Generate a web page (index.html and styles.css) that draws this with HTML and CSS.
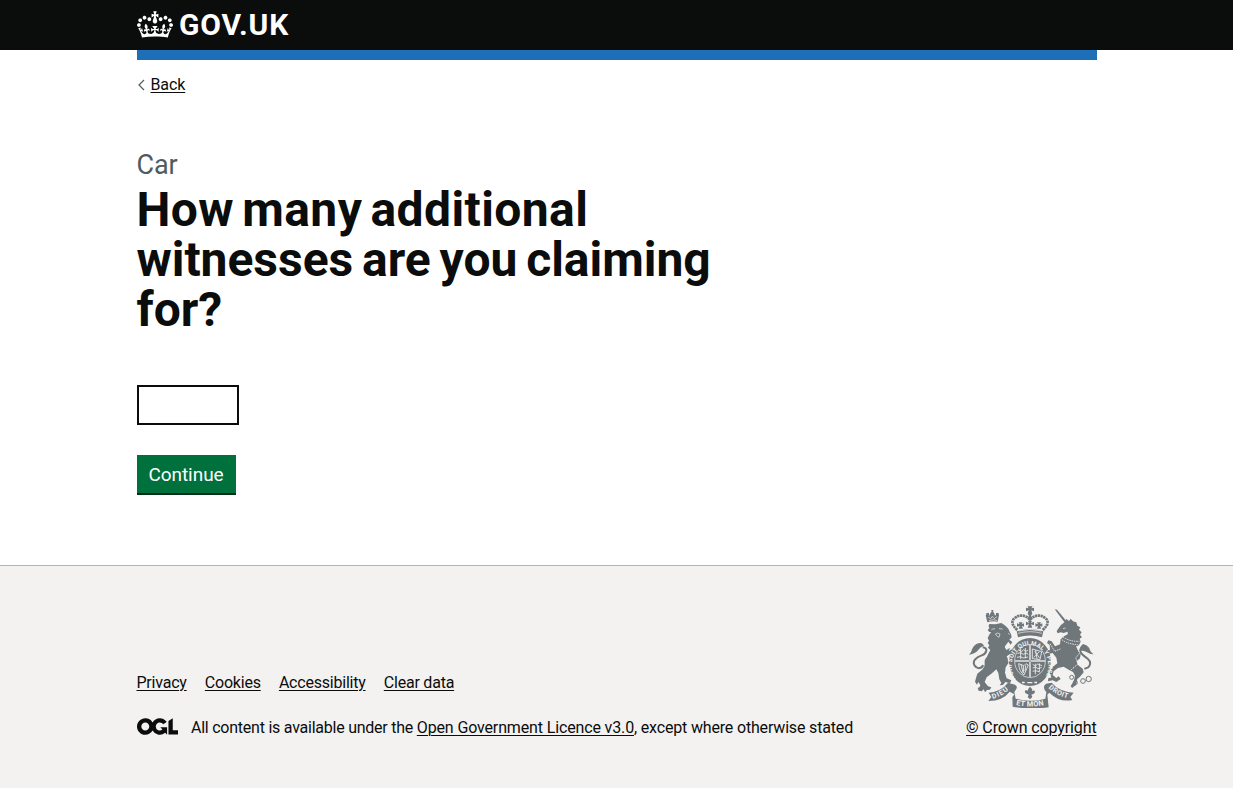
FILE: index.html
```html
<!DOCTYPE html>
<html lang="en"><head><meta charset="utf-8"><title>How many additional witnesses are you claiming for?</title><link rel="stylesheet" href="styles.css"></head>
<body>
<header class="header"><div class="container header-inner">
<a class="logo" href="#">
<svg class="crown" viewBox="0 0 132 97" aria-hidden="true"><path fill="currentColor" fill-rule="evenodd" d="M25 30.2c3.5 1.5 7.7-.2 9.1-3.7 1.5-3.6-.2-7.8-3.9-9.2-3.6-1.4-7.6.3-9.1 3.9-1.4 3.5.3 7.5 3.9 9zM9 39.5c3.6 1.5 7.8-.2 9.2-3.7 1.5-3.6-.2-7.8-3.9-9.1-3.6-1.5-7.6.2-9.1 3.8-1.4 3.5.3 7.5 3.8 9zM4.4 57.2c3.5 1.5 7.7-.2 9.1-3.8 1.5-3.6-.2-7.7-3.9-9.1-3.5-1.5-7.6.3-9.1 3.8-1.4 3.5.3 7.6 3.9 9.1zm38.3-21.4c3.5 1.5 7.7-.2 9.1-3.8 1.5-3.6-.2-7.7-3.9-9.1-3.6-1.5-7.6.3-9.1 3.8-1.3 3.6.4 7.7 3.9 9.1zm64.4-5.6c-3.6 1.5-7.8-.2-9.1-3.7-1.5-3.6.2-7.8 3.8-9.2 3.6-1.4 7.7.3 9.2 3.9 1.3 3.5-.4 7.5-3.9 9zm15.9 9.3c-3.6 1.5-7.7-.2-9.1-3.7-1.5-3.6.2-7.8 3.7-9.1 3.6-1.5 7.7.2 9.2 3.8 1.5 3.5-.3 7.5-3.8 9zm4.7 17.7c-3.6 1.5-7.8-.2-9.2-3.8-1.5-3.6.2-7.7 3.9-9.1 3.6-1.5 7.7.3 9.2 3.8 1.3 3.5-.4 7.6-3.9 9.1zM89.3 35.8c-3.6 1.5-7.8-.2-9.2-3.8-1.4-3.6.2-7.7 3.9-9.1 3.6-1.5 7.7.3 9.2 3.8 1.4 3.6-.3 7.7-3.9 9.1zM69.7 17.7l8.9 4.7V9.3l-8.9 2.8c-.2-.3-.5-.6-.9-.9L72.4 0H59.6l3.5 11.2c-.3.3-.6.5-.9.9l-8.8-2.8v13.1l8.8-4.7c.3.3.6.7.9.9l-5 15.4v.1c-.2.8-.4 1.6-.4 2.4 0 4.1 3.1 7.5 7 8.1h.2c.3 0 .7.1 1 .1.4 0 .7 0 1-.1h.2c4-.6 7.1-4.1 7.1-8.1 0-.8-.1-1.7-.4-2.4V34l-5.1-15.4c.4-.2.7-.6 1-.9zM66 92.8c16.9 0 32.8 1.1 47.1 3.2 4-16.9 8.9-26.7 14-33.5l-9.6-3.4c1 4.9 1.1 7.2 0 10.2-1.5-1.4-3-4.3-4.2-8.7L108.6 76c2.8-2 5-3.2 7.5-3.3-4.4 9.4-10 11.9-13.6 11.2-4.3-.8-6.3-4.6-5.6-7.9 1-4.7 5.7-5.9 8-.5 4.3-8.7-3-11.4-7.6-8.8 7.1-7.2 7.9-13.5 2.1-21.1-8 6.1-8.1 12.3-4.5 20.8-4.7-5.4-12.1-2.5-9.5 6.2 3.4-5.2 7.9-2 7.2 3.1-.6 4.3-6.4 7.8-13.5 7.2-10.3-.9-10.9-8-11.2-13.8 2.5-.5 7.1 1.8 11 7.3L80.2 60c-4.1 4.4-8 5.3-12.3 5.4 1.4-4.4 8-11.6 8-11.6H55.5s6.4 7.2 7.9 11.6c-4.2-.1-8-1-12.3-5.4l1.4 16.4c3.9-5.5 8.5-7.7 10.9-7.3-.3 5.8-.9 12.8-11.1 13.8-7.2.6-12.9-2.9-13.5-7.2-.7-5 3.8-8.3 7.1-3.1 2.7-8.7-4.6-11.6-9.4-6.2 3.7-8.5 3.6-14.7-4.6-20.8-5.8 7.6-5 13.9 2.2 21.1-4.7-2.6-11.9.1-7.7 8.8 2.3-5.5 7.1-4.2 8.1.5.7 3.3-1.3 7.1-5.7 7.9-3.5.7-9-1.8-13.5-11.2 2.5.1 4.7 1.3 7.5 3.3l-4.7-15.4c-1.2 4.4-2.7 7.2-4.3 8.7-1.1-3-.9-5.3 0-10.2l-9.5 3.4c5 6.9 9.9 16.7 14 33.5 14.8-2.1 30.8-3.2 47.7-3.2z"/></svg>
<span class="logo-text">GOV.UK</span></a></div></header>
<div class="page"><div class="container"><div class="bar"></div>
<a class="back" href="#"><svg class="chevron" viewBox="0 0 8 12"><path d="M7 1L2 6l5 5" fill="none" stroke="#505a5f" stroke-width="1.2"/></svg><span class="back-text">Back</span></a>
<main class="main"><span class="caption">Car</span>
<h1 class="heading"><span class="line-first">How many additional</span><br><span class="line-second">witnesses are you claiming</span><br>for?</h1>
<input class="input" type="text" aria-label="Number of additional witnesses">
<button class="button" type="button">Continue</button></main></div></div>
<footer class="footer"><div class="container footer-inner"><div class="meta">
<nav class="links"><a href="#">Privacy</a><a href="#">Cookies</a><a href="#">Accessibility</a><a href="#">Clear data</a></nav>
<div class="licence"><svg class="ogl" viewBox="0 0 483.2 195.7"><path fill="currentColor" d="M421.5 142.8V.1l-50.7 32.3v161.1h112.4v-50.7zm-122.3-9.6A47.12 47.12 0 0 1 221 97.8c0-26 21.1-47.1 47.1-47.1 16.7 0 31.4 8.7 39.7 21.8l42.7-27.2A97.63 97.63 0 0 0 268.1 0c-36.5 0-68.3 20.1-85.1 49.7A98 98 0 0 0 97.8 0C43.9 0 0 43.9 0 97.8s43.9 97.8 97.8 97.8c36.5 0 68.3-20.1 85.1-49.7a97.76 97.76 0 0 0 149.6 25.4l19.4 22.2h3v-87.8h-80l24.3 27.5zM97.8 145c-26 0-47.1-21.1-47.1-47.1s21.1-47.1 47.1-47.1 47.1 21.1 47.1 47.1S123.8 145 97.8 145"/></svg>
<span><span class="licence-lead">All content is available under the </span><a class="licence-link" href="#">Open Government Licence v3.0</a><span class="licence-tail">, except where otherwise stated</span></span></div></div>
<div class="copyright">
<svg class="arms" viewBox="15 12 375 306" aria-hidden="true">
<defs><path id="garter" d="M155 230A55 62 0 1 1 241 230"/><path id="scroll-left" d="M86 291Q114 283 136 262"/><path id="scroll-mid" d="M156 309Q198 318 242 309"/><path id="scroll-right" d="M253 258Q280 283 316 290"/></defs>
<g fill="#6f777b">
<!-- lion -->
<path d="M76 66Q71 73 76 79L71 84 76 90 82 91 77 96 71 108 75 116 71 123 76 130 72 137 79 144 73 155 69 164Q60 172 62 184Q64 194 56 202L40 215 36 228 33 239 39 248 43 240 49 249 47 255 41 258 44 266 53 268 59 262 63 271 69 264 78 263 82 256 72 253 62 240 68 226 84 214 97 202 103 213 106 232 112 243 107 250 117 249 124 240 138 244 142 235 128 229 123 212 125 196 133 184 145 188 134 176 128 163 139 156 150 150 142 142 134 148 138 137 127 144 122 134 133 119 140 128 145 120 136 113 143 106 141 97 137 89 133 80 125 72 118 67 112 63 94 67Z"/>
<path d="M70 61L65 40 71 35 75 42 80 32 85 26 90 32 93 41 99 34 105 40 101 59Q85 55 70 61Z"/>
<!-- lion crown jewels and tail -->
<path d="M82 24h6v4h-6zM67 33h8v8h-8zM96 33h8v8h-8z"/>
<path d="M15 158Q23 151 24 142Q31 127 43 124Q56 120 60 131Q48 135 42 145Q35 155 15 158Z"/>
<!-- unicorn -->
<path d="M272 22L279 23 309 59 303 63Z"/>
<path d="M290 70L306 57 306 50 315 57 320 50 327 58 337 61 340 71 349 76 345 83 353 91 348 98 354 106 347 110 350 119 345 129 337 134 343 147 350 156 348 169 338 178 341 188 356 200 359 211 348 224 340 231 336 249 324 258 320 252 329 238 333 221 327 210 314 203 299 194 282 198 269 208 266 219 277 228 284 223 290 231 277 240 266 235 252 238 253 228 262 227 256 211 266 195 280 184 277 167 266 153 256 155 245 144 258 145 257 129 249 123 253 115 263 118 273 133 288 127 290 111 300 103 311 97 311 89 299 93 290 91 281 94 278 87Z"/>
<path d="M389 157Q379 157 366 149Q356 144 348 147Q346 134 357 126Q368 128 376 138Q378 150 389 157Z"/>
<!-- crown -->
<path d="M194 19l-4-6h16l-4 6 8-2v11l-8-3 3 10-4 6 5 9-8 7-8-7 5-9-4-6 3-10-8 3V17zM158 88Q198 75 238 88L234 106Q198 95 162 106ZM164 80l3-8-8 2v-10l8 3-3-6h12l-3 6 7-3v10l-7-2 4 8zM219 80l3-8-8 2v-10l8 3-3-6h12l-3 6 7-3v10l-7-2 4 8zM191 77l4-10-9 3V59l9 4-3-7h12l-3 7 9-4v11l-9-3 4 10z"/>
<ellipse cx="198" cy="180" rx="63" ry="72"/>
<!-- scroll -->
<path d="M74 272Q112 268 132 242L153 248Q163 254 155 264L151 270 155 290Q198 303 244 290L247 270Q233 255 246 245L263 242Q284 268 329 272L319 285 325 294Q286 302 256 272L250 278 254 316Q198 323 146 314L145 286 151 277 137 269Q117 296 73 297L82 285Z"/>
</g>
<g fill="none" stroke="#6f777b">
<path stroke-width="6" d="M56 136C73 137 69 154 53 160C35 166 24 178 32 191C40 203 55 199 57 189M352 137C341 151 359 161 371 170C384 181 379 198 361 200"/>
<path stroke-width="8" stroke-dasharray="7 1.6" d="M160 84Q136 63 151 49Q174 31 198 52M236 84Q260 63 245 49Q222 31 198 52"/>
<path stroke-width="3" d="M317 226a6 6 0 1 0 12 0a6 6 0 1 0-12 0M328 242a6 6 0 1 0 12 0a6 6 0 1 0-12 0M350 237a7 7 0 1 0 14 0a7 7 0 1 0-14 0M366 231a8 8 0 1 0 16 0a8 8 0 1 0-16 0"/>
</g>
<g fill="none" stroke="#f3f2f1" stroke-width="2">
<path d="M75 56Q88 50 99 56M73 46l7 4 5-7 6 7 8-6M82 82l11-2M105 80l11 1M94 96l6-3 8 3-3 10-5-3zM132 94l5 3M162 94Q198 84 234 94M164 87Q198 78 232 87"/>
<ellipse cx="198" cy="177" rx="46" ry="50"/>
<path stroke-width="3" stroke-dasharray="4 3" d="M289 108Q304 126 342 128M292 101Q312 119 346 118M338 133l9 20-12 15 8 17-21 18M258 125l14 23 17-7"/>
<path d="M297 80l8-2M134 160Q129 205 156 237M262 160Q267 205 240 237" stroke-width="2"/>
</g>
<!-- quartered shield -->
<g stroke="#f3f2f1" stroke-width="2.5" fill="none">
<path d="M198 128V225M153 177H244" stroke-width="6"/>
<path d="M164 144l8 5 7-6 6 5 7-3M160 155l9-3 9 5 8-4 7 4M159 166l11-2 7 4 15-3M170 139v32M184 138v31M205 141l28 8-5 24-23-3zM212 148l15 20M226 149l-17 18M215 144l4 27M164 185Q165 208 180 219L193 189 186 185 180 191zM171 187l6 25M178 192l1 21M185 190l-2 17M206 187l8 5 7-6 13 5M206 198l9-3 7 5 11-4M206 208l9-2 12 4M214 185v32M226 184v26"/>
</g>
<path d="M198 128V225M153 177H244" stroke="#6f777b" stroke-width="2"/>
<!-- emblem beneath the shield -->
<path fill="#f3f2f1" d="M174 239h8v5h-8zM211 239h8v5h-8zM190 240h15v4h-15zM180 254h36l3 34q-22 6-42 0z"/>
<path fill="#6f777b" d="M198 254q-11 10-4 18-1-9-10-7-5 8 7 12l3 1-3 7 7 7 7-7-3-7q14-4 10-12-8-3-10 6 7-10-4-18z"/>
<g class="motto"><text font-size="18"><textPath href="#garter" textLength="256">HONI SOIT QUI MAL Y PENSE</textPath></text>
<text font-size="21"><textPath href="#scroll-left" textLength="55">DIEU</textPath></text><text font-size="22"><textPath href="#scroll-mid" textLength="84">ET MON</textPath></text><text font-size="21"><textPath href="#scroll-right" textLength="66">DROIT</textPath></text></g>
</svg><a class="crown-copy" href="#">© Crown copyright</a></div>
</div></footer></body></html>
```
FILE: styles.css
```css
*{box-sizing:border-box}
body{margin:0;background:#f3f2f1;color:#0b0c0c;font-family:Roboto,"Liberation Sans",sans-serif;font-size:16px;line-height:20px}
a{color:inherit;text-decoration-thickness:1px;text-underline-offset:2px}
.container{width:960px;margin:0 auto}
.header{background:#0b0c0c;height:50px;color:#fff}
.logo{display:flex;align-items:flex-start;gap:6.5px;padding-top:10px;text-decoration:none}
.crown{width:36px;height:27px;margin-top:1px}
.logo-text{font-size:30px;line-height:30px;font-weight:700;letter-spacing:.9px}
.page{background:#fff;height:515px}
.bar{height:10px;background:#1d70b8}
.back{display:flex;align-items:center;gap:6px;padding-top:15px;text-decoration:none}
.chevron{width:8px;height:12px}
.back-text{text-decoration:underline;text-decoration-thickness:1px;text-underline-offset:2px;letter-spacing:-.1px}
.main{padding-top:55px}
.caption{display:block;font-size:27px;line-height:30px;color:#505a5f;letter-spacing:-.1px}
.heading{margin:5px 0 50px;font-size:48px;line-height:50px;font-weight:700;white-space:nowrap}
.line-first{letter-spacing:.4px;word-spacing:-4px}
.line-second{letter-spacing:-.03px;word-spacing:-3px}
.input{display:block;width:102px;height:40px;border:2px solid #0b0c0c;padding:5px;font:inherit;border-radius:0;background:#fff}
.button{display:block;margin-top:30px;width:99px;height:38px;padding:0;border:0;background:#00703c;box-shadow:0 2px 0 #002d18;color:#fff;font:19px/19px Roboto,sans-serif;letter-spacing:-.05px}
.footer{border-top:1px solid #b1b4b6;height:223px;padding-top:40px}
.footer-inner{display:flex;justify-content:space-between;align-items:flex-end}
.links{display:flex;gap:18.2px;margin-bottom:25px;letter-spacing:-.22px}
.licence{display:flex;gap:13.5px}
.ogl{width:41px;height:17px}
.licence-lead{letter-spacing:-.24px}
.licence-link{letter-spacing:-.14px}
.licence-tail{letter-spacing:-.17px}
.copyright{display:flex;flex-direction:column;align-items:center}
.arms{width:125px;height:102px;margin-bottom:10px}
.crown-copy{letter-spacing:-.12px}
.motto{fill:#f3f2f1;font-weight:700}
```
